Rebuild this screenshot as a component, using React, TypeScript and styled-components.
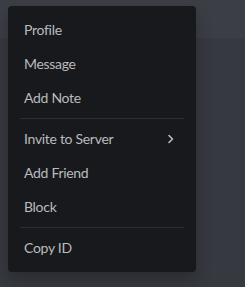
import styled, { createGlobalStyle } from 'styled-components'

const Global = createGlobalStyle`
  html, body {
    margin: 0;
    padding: 0;
    background: #36393f;
  }
  body {
    font-family: Lato, "Noto Sans", sans-serif;
  }
`

const Page = styled.div`
  position: relative;
  width: 245px;
  height: 287px;
  display: flex;
  flex-direction: column;
  overflow: hidden;
`

const TopBar = styled.div`
  height: 38px;
  background: #3b3e45;
  flex-shrink: 0;
`

const Content = styled.div`
  flex: 1;
  background: #36393f;
`

const Menu = styled.div`
  position: absolute;
  top: 6px;
  left: 8px;
  width: 188px;
  box-sizing: border-box;
  padding: 8px;
  background: #18191c;
  border-radius: 4px;
  box-shadow: 0 8px 16px rgba(0, 0, 0, 0.24);
  display: flex;
  flex-direction: column;
  gap: 2px;
`

const Item = styled.div`
  height: 32px;
  padding: 0 8px;
  display: flex;
  align-items: center;
  justify-content: space-between;
  color: #b9bbbe;
  font-size: 14px;
  line-height: 18px;
  letter-spacing: -0.3px;
  border-radius: 2px;
  cursor: pointer;
`

const Separator = styled.div`
  height: 1px;
  margin: 2px 4px;
  background: #2e2f34;
`

const Chevron = () => (
  <svg width="18" height="18" viewBox="0 0 18 18" fill="none">
    <path d="M7 5.5L10.5 9L7 12.5" stroke="#b9bbbe" strokeWidth="1.6" strokeLinecap="round" strokeLinejoin="round" />
  </svg>
)

export default function App() {
  return (
    <Page>
      <Global />
      <TopBar />
      <Content />
      <Menu>
        <Item>Profile</Item>
        <Item>Message</Item>
        <Item>Add Note</Item>
        <Separator />
        <Item>
          Invite to Server
          <Chevron />
        </Item>
        <Item>Add Friend</Item>
        <Item>Block</Item>
        <Separator />
        <Item>Copy ID</Item>
      </Menu>
    </Page>
  )
}
